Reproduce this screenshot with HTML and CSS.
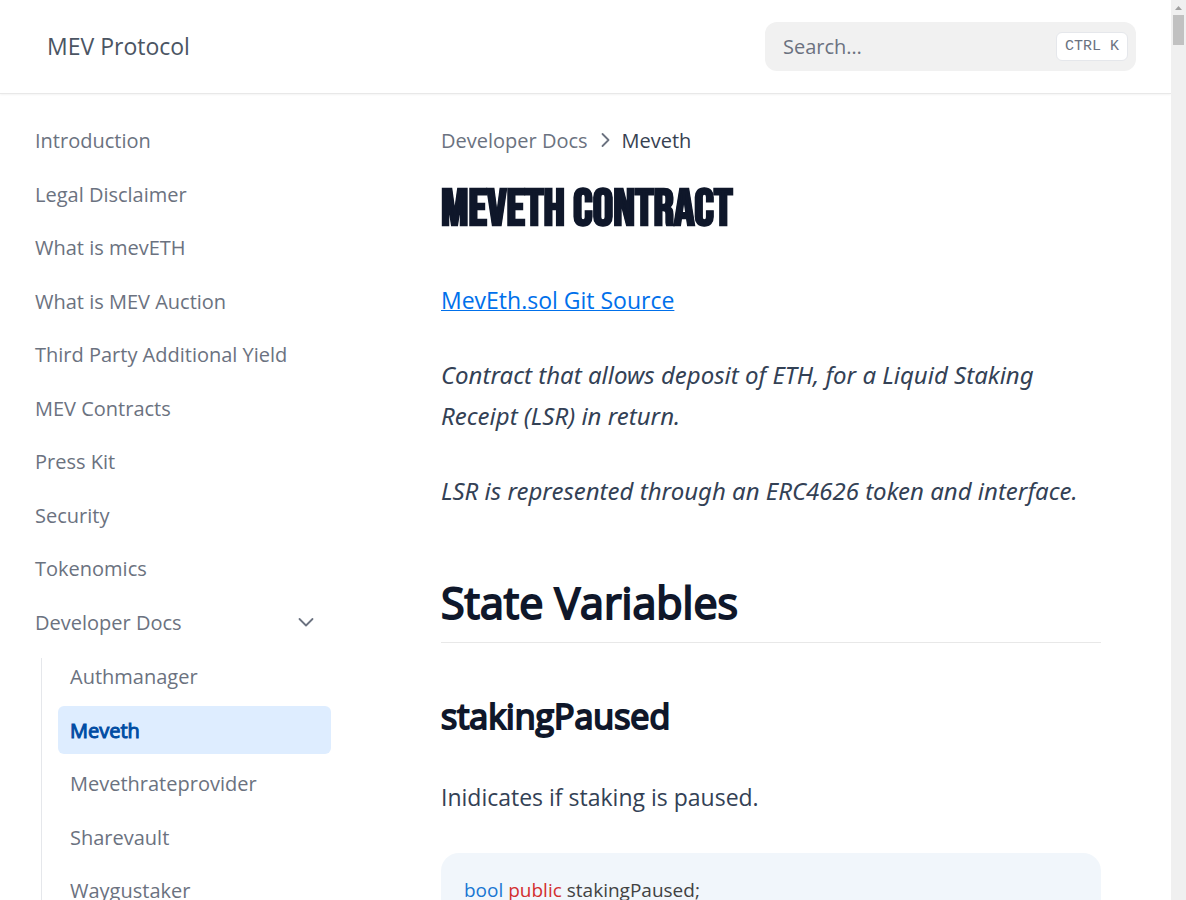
FILE: index.html
```html
<!DOCTYPE html>
<html lang="en">
<head>
<meta charset="utf-8">
<meta name="viewport" content="width=device-width, initial-scale=1">
<title>Meveth – MEV Protocol</title>
<link rel="stylesheet" href="styles.css">
</head>
<body>
<div class="shell">
  <div class="page">
    <header class="navbar">
      <a class="brand" href="#">MEV Protocol</a>
      <label class="search">
        <input class="search-input" type="search" placeholder="Search…" aria-label="Search">
        <kbd class="search-key">CTRL K</kbd>
      </label>
    </header>
    <div class="columns">
      <nav class="sidebar" aria-label="Documentation">
        <ul class="menu">
          <li><a class="menu-link" href="#">Introduction</a></li>
          <li><a class="menu-link" href="#">Legal Disclaimer</a></li>
          <li><a class="menu-link" href="#">What is mevETH</a></li>
          <li><a class="menu-link" href="#">What is MEV Auction</a></li>
          <li><a class="menu-link" href="#">Third Party Additional Yield</a></li>
          <li><a class="menu-link" href="#">MEV Contracts</a></li>
          <li><a class="menu-link" href="#">Press Kit</a></li>
          <li><a class="menu-link" href="#">Security</a></li>
          <li><a class="menu-link" href="#">Tokenomics</a></li>
          <li>
            <button class="menu-link menu-toggle" type="button" aria-expanded="true">Developer Docs
              <svg class="chevron" viewBox="0 0 26 26" aria-hidden="true"><path d="M6.500 10l6.500 6.500 6.500-6.500"/></svg>
            </button>
            <ul class="submenu">
              <li><a class="menu-link" href="#">Authmanager</a></li>
              <li><a class="menu-link active" href="#" aria-current="page">Meveth</a></li>
              <li><a class="menu-link" href="#">Mevethrateprovider</a></li>
              <li><a class="menu-link" href="#">Sharevault</a></li>
              <li><a class="menu-link" href="#">Waygustaker</a></li>
            </ul>
          </li>
        </ul>
      </nav>
      <main class="content">
        <div class="breadcrumb">
          <span>Developer Docs</span>
          <svg class="crumb-arrow" viewBox="0 0 20 20" aria-hidden="true"><path d="M7.500 4l6 6-6 6"/></svg>
          <span class="crumb-current">Meveth</span>
        </div>
        <h1 class="title">MEVETH CONTRACT</h1>
        <p class="text"><a class="link" href="#">MevEth.sol Git Source</a></p>
        <p class="text"><em>Contract that allows deposit of ETH, for a Liquid Staking Receipt (LSR) in return.</em></p>
        <p class="text"><em>LSR is represented through an ERC4626 token and interface.</em></p>
        <h2 class="section-title">State Variables</h2>
        <h3 class="subsection-title">stakingPaused</h3>
        <p class="text">Inidicates if staking is paused.</p>
        <pre class="code"><code><span class="type">bool</span> <span class="keyword">public</span> stakingPaused;</code></pre>
      </main>
    </div>
  </div>
  <div class="scrollbar" aria-hidden="true">
    <svg class="scroll-arrow" viewBox="0 0 15 15"><path d="M4 10h7L7.500 6z"/></svg>
    <div class="scroll-thumb"></div>
  </div>
</div>
</body>
</html>
```
FILE: styles.css
```css
* {
  box-sizing: border-box;
}

body {
  margin: 0;
  background: #fff;
  color: #334155;
  font-family: "Open Sans", "Noto Sans", sans-serif;
  font-size: 23px;
}

a {
  color: inherit;
  text-decoration: none;
}

.shell {
  display: flex;
  height: 100vh;
  overflow: hidden;
}

.page {
  flex: 1;
  min-width: 0;
}

.navbar {
  display: flex;
  align-items: center;
  justify-content: space-between;
  height: 93px;
  padding: 0 35px 0 47px;
  box-shadow: 0 1px 0 #e8e8e8, 0 2px 2px #f4f4f4;
}

.brand {
  padding-bottom: 2px;
  color: #4b5563;
  line-height: 34px;
}

.search {
  display: flex;
  align-items: center;
  width: 371px;
  height: 49px;
  padding: 0 8px 0 18px;
  border-radius: 12px;
  background: #f1f1f1;
}

.search-input {
  flex: 1;
  min-width: 0;
  padding: 0;
  border: 0;
  outline: 0;
  background: transparent;
  font: inherit;
  font-size: 20px;
}

.search-input::placeholder {
  color: #6b7280;
  opacity: 1;
}

.search-key {
  height: 29px;
  padding: 0 8px;
  border: 1px solid #e5e7eb;
  border-radius: 6px;
  background: #fff;
  color: #6b7280;
  font: 15px/28px "Liberation Mono", monospace;
  white-space: pre;
}

.columns {
  display: flex;
}

.sidebar {
  flex: none;
  width: 354px;
  padding: 23px;
}

.menu,
.submenu {
  display: flex;
  flex-direction: column;
  gap: 5px;
  margin: 0;
  padding: 0;
  list-style: none;
}

.menu li:nth-child(even) {
  padding-top: 1px;
}

.submenu {
  margin: 12px 0 0 18px;
  padding-left: 16px;
  border-left: 1px solid #e5e7eb;
}

.submenu li:first-child {
  margin-top: -6px;
}

.menu-link {
  display: flex;
  align-items: center;
  width: 100%;
  height: 48px;
  padding: 0 12px;
  border: 0;
  border-radius: 6px;
  background: transparent;
  color: #6b7280;
  font: inherit;
  font-size: 20px;
}

.menu-toggle {
  justify-content: space-between;
}

.chevron {
  width: 26px;
  height: 26px;
  fill: none;
  stroke: #6b7280;
  stroke-width: 1.8;
  stroke-linecap: round;
  stroke-linejoin: round;
}

.active {
  background: #deedff;
  color: #004ca3;
  -webkit-text-stroke: 1px currentColor;
}

.content {
  flex: 1;
  min-width: 0;
  padding: 30px 70px 0 87px;
}

.breadcrumb {
  display: flex;
  align-items: center;
  gap: 7px;
  height: 34px;
  color: #6b7280;
  font-size: 20px;
}

.crumb-arrow {
  width: 20px;
  height: 20px;
  fill: none;
  stroke: #6b7280;
  stroke-width: 1.8;
  stroke-linecap: round;
  stroke-linejoin: round;
}

.crumb-current {
  color: #374151;
}

.title {
  margin: 15px 0 0;
  color: #0f172a;
  font-family: "Bebas Neue", "Open Sans", sans-serif;
  font-size: 51px;
  line-height: 76px;
  white-space: nowrap;
  -webkit-text-stroke: 1px currentColor;
}

.text {
  margin: 34px 0 0;
  line-height: 41px;
}

.title + .text {
  margin-top: 32px;
}

.text em {
  font-family: "Noto Sans", "Open Sans", sans-serif;
  font-size: 24px;
  line-height: 24px;
}

.link {
  color: #0070eb;
  text-decoration: underline;
  text-decoration-thickness: 1px;
}

.section-title,
.subsection-title {
  color: #0f172a;
  font-weight: 400;
}

.section-title {
  margin: 62px 0 0;
  padding-bottom: 10px;
  border-bottom: 1px solid #e8e8e8;
  font-size: 43px;
  line-height: 58px;
  -webkit-text-stroke: 2px currentColor;
}

.subsection-title {
  margin: 47px 0 0;
  font-size: 34px;
  line-height: 52px;
  -webkit-text-stroke: 2px currentColor;
}

.subsection-title + .text {
  margin-top: 35px;
}

.code {
  margin: 35px 0 0;
  padding: 20px 23px;
  border-radius: 18px;
  background: #f1f6fb;
  color: #424242;
  font-family: inherit;
  font-size: 19px;
  line-height: 34px;
}

.code code {
  font: inherit;
}

.type {
  color: #1976d2;
}

.keyword {
  color: #d32f2f;
}

.scrollbar {
  flex: none;
  width: 15px;
  background: #f0f0f0;
}

.scroll-arrow {
  display: block;
  width: 15px;
  height: 15px;
  fill: #a0a0a0;
}

.scroll-thumb {
  height: 30px;
  margin: 0 2px;
  background: #c1c1c1;
}
```
